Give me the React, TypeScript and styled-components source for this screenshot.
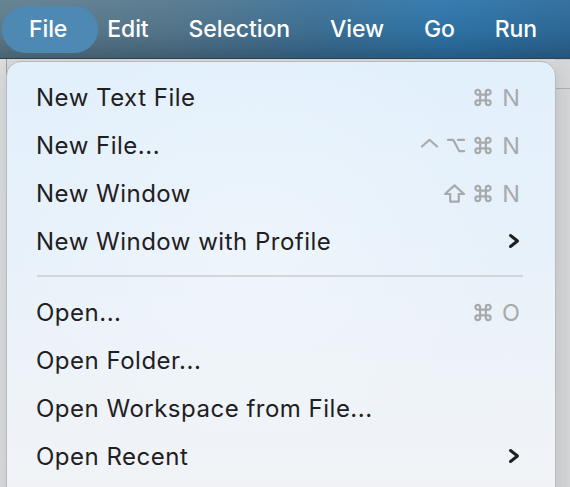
import styled, { createGlobalStyle } from "styled-components";

const GlobalStyle = createGlobalStyle`
  html, body {
    margin: 0;
    padding: 0;
    background: #d8d9db;
    overflow: hidden;
  }
  * { box-sizing: border-box; }
`;

const Screen = styled.div`
  position: relative;
  width: 570px;
  height: 487px;
  overflow: hidden;
  display: flex;
  flex-direction: column;
  font-family: Inter, "Liberation Sans", sans-serif;
`;

const MenuBar = styled.div`
  height: 59px;
  flex-shrink: 0;
  display: flex;
  align-items: center;
  padding-left: 9px;
  border-bottom: 1px solid #33414c;
  background:
    linear-gradient(to bottom, rgba(255, 255, 255, 0.04) 0%, rgba(0, 0, 0, 0.05) 55%, rgba(10, 25, 40, 0.28) 100%),
    linear-gradient(to right, #62808f 0%, #56798f 30%, #3f7399 55%, #2f78ad 78%, #2f6c9c 100%);
`;

const MenuTitle = styled.div<{ $active?: boolean }>`
  position: relative;
  padding: 0 20px;
  height: 100%;
  display: flex;
  align-items: center;
  color: #ffffff;
  font-size: 23px;
  font-weight: 500;
  letter-spacing: -0.1px;
  white-space: nowrap;

  &::before {
    content: "";
    display: ${({ $active }) => ($active ? "block" : "none")};
    position: absolute;
    top: 6px;
    bottom: 5px;
    left: -7px;
    right: -11px;
    border-radius: 24px;
    background: #4e89b4;
  }

  span {
    position: relative;
  }
`;

const Workspace = styled.div`
  flex: 1;
  position: relative;
  background: #d9dadc;
`;

const EditorStrip = styled.div`
  position: absolute;
  right: 0;
  top: 0;
  bottom: 0;
  width: 15px;
  background: #d5d6d8;
  border-top: 1px solid #c4c5c7;

  &::after {
    content: "";
    position: absolute;
    left: 0;
    right: 0;
    top: 28px;
    height: 1px;
    background: #aeb0b3;
  }
`;

const LeftStrip = styled.div`
  position: absolute;
  left: 0;
  top: 0;
  bottom: 0;
  width: 7px;
  background: #dcdddf;
  border-right: 1px solid #9fa1a4;
`;

const Dropdown = styled.div`
  position: absolute;
  left: 6px;
  top: 2px;
  width: 550px;
  bottom: -20px;
  padding-top: 11px;
  border-radius: 15px 15px 0 0;
  border: 1px solid #b7babe;
  background:
    radial-gradient(ellipse at 45% 40%, rgba(255, 255, 255, 0.25), transparent 60%),
    linear-gradient(to bottom, #e2f0fc 0%, #e7f1fa 40%, #eef3f8 75%, #f1f3f6 100%);
  box-shadow: 0 6px 20px rgba(0, 0, 0, 0.12);
`;

const Item = styled.div`
  height: 48px;
  display: flex;
  align-items: center;
  justify-content: space-between;
  padding: 0 35px 0 29px;
  color: #1f2022;
  font-size: 24px;
  font-weight: 400;
  letter-spacing: 0.5px;
  white-space: nowrap;
`;

const Shortcut = styled.div`
  display: flex;
  align-items: center;
  gap: 7px;
  color: #a8a9ab;
`;

const KeyLetter = styled.span`
  font-size: 23.5px;
  font-weight: 400;
  letter-spacing: 0;
  margin-left: 2px;
`;

const Separator = styled.div`
  height: 2px;
  margin: 10px 32px 11px 30px;
  background: #d3d6da;
`;

const KeyIcon = styled.svg`
  display: block;
  fill: none;
  stroke: #a8a9ab;
  stroke-width: 2.3;
  stroke-linecap: round;
  stroke-linejoin: round;
`;

const Command = () => (
  <KeyIcon width="20" height="19" viewBox="0 0 20 20">
    <path d="M7 7 L7 4.5 A2.5 2.5 0 1 0 4.5 7 L15.5 7 A2.5 2.5 0 1 0 13 4.5 L13 15.5 A2.5 2.5 0 1 0 15.5 13 L4.5 13 A2.5 2.5 0 1 0 7 15.5 Z" />
  </KeyIcon>
);

const Option = () => (
  <KeyIcon width="20" height="19" viewBox="0 0 20 20">
    <path d="M1.5 4 H7 L13.5 16 H18.5 M12 4 H18.5" />
  </KeyIcon>
);

const Control = () => (
  <KeyIcon width="19" height="19" viewBox="0 0 20 20">
    <polyline points="2,11 10,4 18,11" />
  </KeyIcon>
);

const Shift = () => (
  <KeyIcon width="23" height="19" viewBox="0 0 24 20">
    <path d="M12 1.5 L22 10.5 H16.5 V18.5 H7.5 V10.5 H2 Z" />
  </KeyIcon>
);

const Chevron = () => (
  <svg width="12" height="16" viewBox="0 0 12 16">
    <polyline
      points="2.5,2.5 9.5,8 2.5,13.5"
      fill="none"
      stroke="#1f2022"
      strokeWidth="3"
      strokeLinecap="round"
      strokeLinejoin="round"
    />
  </svg>
);

type KeyName = "ctrl" | "opt" | "cmd" | "shift";

const keyIcons: Record<KeyName, () => JSX.Element> = {
  ctrl: Control,
  opt: Option,
  cmd: Command,
  shift: Shift,
};

type Entry =
  | { kind: "item"; label: string; keys?: KeyName[]; letter?: string; submenu?: boolean }
  | { kind: "sep" };

const entries: Entry[] = [
  { kind: "item", label: "New Text File", keys: ["cmd"], letter: "N" },
  { kind: "item", label: "New File...", keys: ["ctrl", "opt", "cmd"], letter: "N" },
  { kind: "item", label: "New Window", keys: ["shift", "cmd"], letter: "N" },
  { kind: "item", label: "New Window with Profile", submenu: true },
  { kind: "sep" },
  { kind: "item", label: "Open...", keys: ["cmd"], letter: "O" },
  { kind: "item", label: "Open Folder..." },
  { kind: "item", label: "Open Workspace from File..." },
  { kind: "item", label: "Open Recent", submenu: true },
];

const titles = ["File", "Edit", "Selection", "View", "Go", "Run"];

export default function App() {
  return (
    <Screen>
      <GlobalStyle />
      <MenuBar>
        {titles.map((t, i) => (
          <MenuTitle key={t} $active={i === 0}>
            <span>{t}</span>
          </MenuTitle>
        ))}
      </MenuBar>
      <Workspace>
        <LeftStrip />
        <EditorStrip />
        <Dropdown>
          {entries.map((e, i) => {
            if (e.kind === "sep") return <Separator key={i} />;
            return (
              <Item key={i}>
                <span>{e.label}</span>
                {e.keys && (
                  <Shortcut>
                    {e.keys.map((k) => {
                      const Icon = keyIcons[k];
                      return <Icon key={k} />;
                    })}
                    <KeyLetter>{e.letter}</KeyLetter>
                  </Shortcut>
                )}
                {e.submenu && <Chevron />}
              </Item>
            );
          })}
        </Dropdown>
      </Workspace>
    </Screen>
  );
}
